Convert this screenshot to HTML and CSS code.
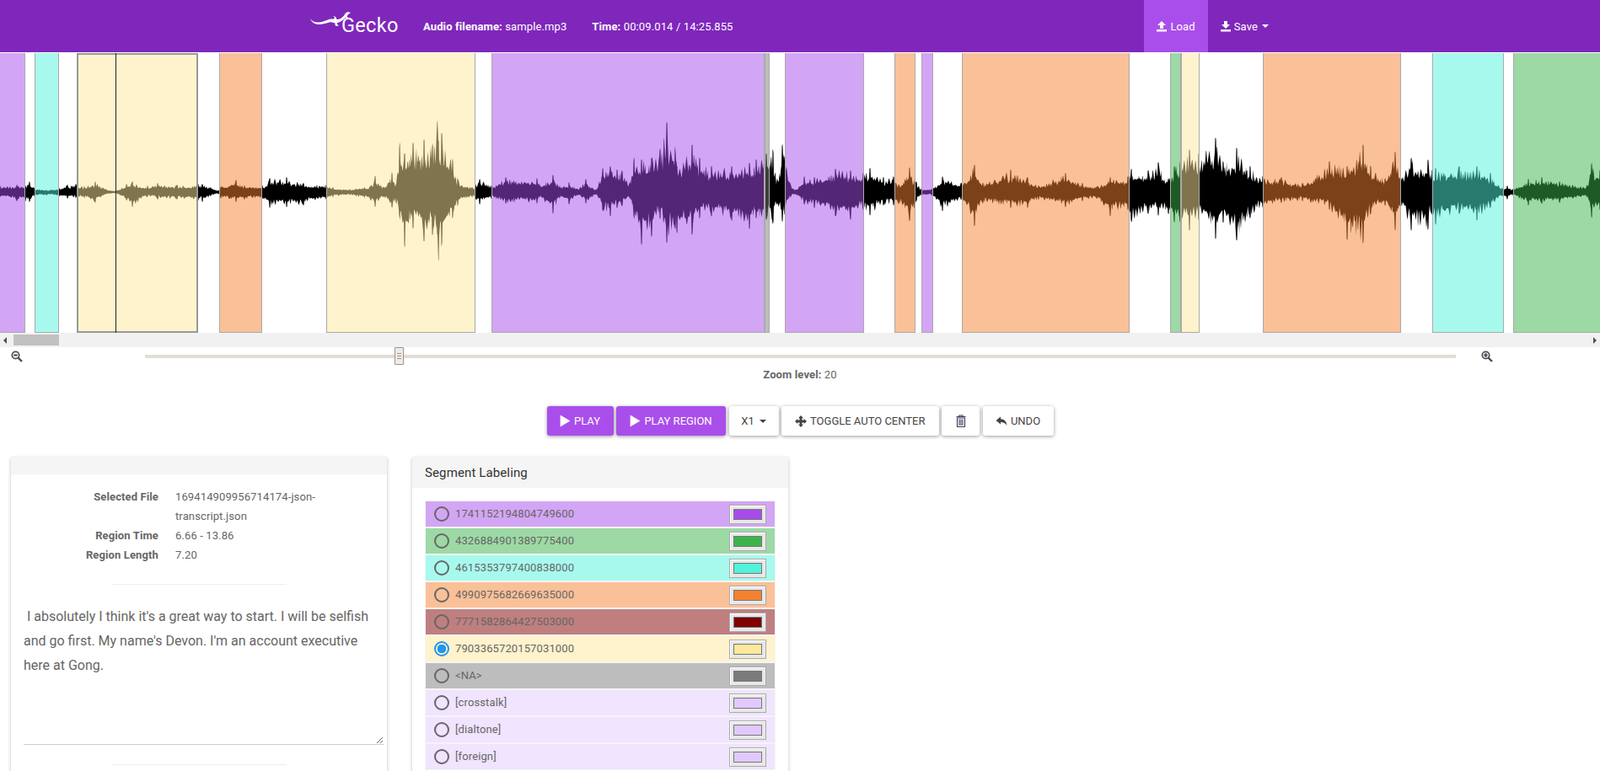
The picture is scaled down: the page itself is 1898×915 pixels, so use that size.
FILE: index.html
```html
<!DOCTYPE html>
<html lang="en">
<head>
    <meta charset="UTF-8">
    <meta name="viewport" content="width=device-width, initial-scale=1.0">
    <title>Gecko</title>
    <link rel="stylesheet" href="styles.css">
</head>

<body>
    <nav class="navbar">
        <a class="brand" href="#">
            <svg class="brand-logo" width="50" height="20" viewBox="0 0 50 20">
                <path fill="#fff" d="M0 8 C2 11 5 12.5 9 12.5 C14 12.5 17 11 21 9.5 C24 8.3 26 8.5 28 8.7 L29 6.5 L27.5 5.5 L28 5 L30 6 L31 7.5 L31.5 9 C34 9 36 8.5 38 6.5 L40 4.5 L42 1.5 L44 0.2 L47 0.5 L47.5 1.5 L45 3 L43.5 5.5 L45 7 L46 7.5 L45.5 8 L43.5 7.5 L41.5 7 C39.5 9.5 37 11.5 34 12.5 L31.5 13.5 L32.5 15.5 L34 16 L33.5 16.5 L30.5 17 L29.5 15.5 L29.5 13.5 C27 13 25.5 12.3 23.5 12.3 C19 13.5 15 15 10 15 C5 15 1.5 12 0 8 Z"/>
            </svg>
            <span class="brand-name">Gecko</span>
        </a>
        <span class="nav-info"><b>Audio filename:</b> sample.mp3</span>
        <span class="nav-info"><b>Time:</b> 00:09.014 / 14:25.855</span>
        <div class="nav-actions">
            <a class="nav-link active" href="#">
                <svg class="icon" width="14" height="14" viewBox="0 0 14 14"><path d="M7 1 L12 6 H9 V10 H5 V6 H2 Z M1 11 H13 V13.5 H1 Z"/></svg>
                Load
            </a>
            <a class="nav-link" href="#">
                <svg class="icon" width="14" height="14" viewBox="0 0 14 14"><path d="M5 1 H9 V5 H12 L7 10 L2 5 H5 Z M1 11 H13 V13.5 H1 Z"/></svg>
                Save <span class="caret"></span>
            </a>
        </div>
    </nav>

    <div class="waveform" id="waveform">
        <svg class="wave" width="1898" height="333" viewBox="0 0 1898 333"><path id="wavePath" d=""/></svg>
    </div>

    <div class="scrollbar">
        <span class="arrow-left"></span>
        <span class="scroll-thumb"></span>
        <span class="arrow-right"></span>
    </div>

    <div class="zoom-row">
        <svg class="zoom-icon" width="14" height="14" viewBox="0 0 14 14"><circle cx="5.5" cy="5.5" r="4.2"/><path class="handle" d="M8.6 8.6 L13 13"/><path class="plus" d="M3.3 5.5 H7.7"/></svg>
        <div class="slider">
            <span class="slider-handle"><i></i><i></i><i></i></span>
        </div>
        <svg class="zoom-icon right" width="14" height="14" viewBox="0 0 14 14"><circle cx="5.5" cy="5.5" r="4.2"/><path class="handle" d="M8.6 8.6 L13 13"/><path class="plus" d="M3.3 5.5 H7.7 M5.5 3.3 V7.7"/></svg>
    </div>
    <div class="zoom-level"><b>Zoom level:</b> 20</div>

    <div class="toolbar">
        <button class="btn primary play-btn"><svg class="icon" width="13" height="15" viewBox="0 0 12 14"><path d="M0.5 0.5 L11.5 7 L0.5 13.5 Z"/></svg> Play</button>
        <button class="btn primary region-btn"><svg class="icon" width="13" height="15" viewBox="0 0 12 14"><path d="M0.5 0.5 L11.5 7 L0.5 13.5 Z"/></svg> Play Region</button>
        <button class="btn speed-btn">x1 <span class="caret"></span></button>
        <button class="btn center-btn"><svg class="icon" width="14" height="14" viewBox="0 0 14 14"><path d="M7 0 L10 3.2 H8.4 V5.6 H10.8 V4 L14 7 L10.8 10 V8.4 H8.4 V10.8 H10 L7 14 L4 10.8 H5.6 V8.4 H3.2 V10 L0 7 L3.2 4 V5.6 H5.6 V3.2 H4 Z"/></svg> Toggle Auto Center</button>
        <button class="btn trash-btn"><svg class="trash" width="12" height="15" viewBox="0 0 12 15"><path d="M4 2 V1 H8 V2 M0.5 2.5 H11.5 M1.5 4 H10.5 V14.5 H1.5 Z M4 5.5 V13 M6 5.5 V13 M8 5.5 V13"/></svg></button>
        <button class="btn undo-btn"><svg class="icon" width="14" height="14" viewBox="0 0 14 14"><path d="M0.5 6 L6 1.5 V4.3 C10 4.3 13 7 13.5 12 C11.5 9 9 8 6 8 V10.5 Z"/></svg> Undo</button>
    </div>

    <div class="workspace">
        <section class="card">
            <div class="card-header empty"></div>
            <div class="file-info">
                <span class="info-label">Selected File</span><span>169414909956714174-json-transcript.json</span>
                <span class="info-label">Region Time</span><span>6.66 - 13.86</span>
                <span class="info-label">Region Length</span><span>7.20</span>
            </div>
            <hr class="divider">
            <textarea class="transcript" spellcheck="false"> I absolutely I think it's a great way to start. I will be selfish and go first. My name's Devon. I'm an account executive here at Gong.</textarea>
            <hr class="divider">
        </section>

        <section class="card">
            <div class="card-header">Segment Labeling</div>
            <div class="label-list" id="labelList"></div>
        </section>
    </div>

    <script src="app.js"></script>
</body>
</html>
```

FILE: styles.css
```css
html, body {
    height: 100%;
    overflow: hidden;
}
body {
    font-family: Roboto, "Liberation Sans", sans-serif;
    font-size: 13px;
    letter-spacing: 0.12px;
    color: #666;
    background: white;
    margin: 0;
}
b {
    font-weight: 700;
}

/* navbar */
.navbar {
    display: flex;
    align-items: center;
    height: 62px;
    padding: 0 378px 0 368px;
    background-color: #7f27bb;
    color: white;
}
.brand {
    display: block;
    position: relative;
    width: 134px;
    height: 62px;
    color: white;
    text-decoration: none;
}
.brand-logo {
    position: absolute;
    left: 0;
    top: 14px;
}
.brand-name {
    position: absolute;
    left: 37px;
    top: 17px;
    font-size: 23.5px;
    font-weight: 400;
    letter-spacing: 0.3px;
    line-height: 27px;
}
.nav-info {
    margin-right: 30px;
}
.nav-actions {
    display: flex;
    margin-left: auto;
}
.nav-link {
    display: flex;
    align-items: center;
    gap: 3px;
    height: 62px;
    padding: 0 15px 0 14px;
    color: white;
    text-decoration: none;
}
.nav-link.active {
    background-color: #aa4eeb;
}
.icon {
    fill: currentColor;
    flex: none;
}
.caret {
    display: inline-block;
    width: 0;
    height: 0;
    margin-left: 2px;
    vertical-align: middle;
    border-top: 4px solid;
    border-left: 4px solid transparent;
    border-right: 4px solid transparent;
}

/* waveform */
.waveform {
    position: relative;
    height: 333px;
    overflow: hidden;
}
.wave {
    position: absolute;
    left: 0;
    top: 0;
}
.region {
    position: absolute;
    top: 1px;
    bottom: 0;
    box-sizing: border-box;
    border: 1px solid #aaa;
    border-top: none;
}
.region.selected {
    border: 2px solid #999;
}
.cursor {
    position: absolute;
    top: 1px;
    bottom: 0;
    width: 1px;
    background: #222;
}

.scrollbar {
    display: flex;
    align-items: center;
    height: 17px;
    background: #f1f1f1;
}
.arrow-left, .arrow-right {
    width: 0;
    height: 0;
    border-top: 4px solid transparent;
    border-bottom: 4px solid transparent;
}
.arrow-left {
    margin-left: 4px;
    border-right: 4px solid #505050;
}
.arrow-right {
    margin-left: auto;
    margin-right: 4px;
    border-left: 4px solid #505050;
}
.scroll-thumb {
    width: 54px;
    height: 13px;
    margin-left: 8px;
    background: #c1c1c1;
}

/* zoom */
.zoom-row {
    display: flex;
    align-items: center;
    height: 21px;
    padding-left: 13px;
}
.zoom-icon {
    flex: none;
    fill: none;
    stroke: #4a4f58;
    stroke-width: 1.8;
}
.zoom-icon .handle {
    stroke-width: 2.4;
}
.zoom-icon .plus {
    stroke-width: 2.2;
}
.zoom-icon.right {
    margin-left: 30px;
}
.slider {
    position: relative;
    width: 1555px;
    height: 4px;
    margin-left: 145px;
    background: #e1dcd5;
}
.slider-handle {
    position: absolute;
    left: 296px;
    top: -9px;
    display: flex;
    flex-direction: column;
    align-items: center;
    justify-content: center;
    gap: 2px;
    box-sizing: border-box;
    width: 11px;
    height: 21px;
    background: #efebe7;
    border: 1px solid #9c9389;
    border-radius: 1px;
}
.slider-handle i {
    width: 5px;
    height: 1px;
    background: #9c9389;
}
.zoom-level {
    margin-top: 2px;
    text-align: center;
    line-height: 20px;
}

/* toolbar */
.toolbar {
    display: flex;
    justify-content: center;
    gap: 3.5px;
    margin-top: 27px;
}
.btn {
    display: flex;
    align-items: center;
    justify-content: center;
    gap: 4px;
    height: 35px;
    padding: 0;
    font-family: inherit;
    font-size: 13px;
    text-transform: uppercase;
    color: #444;
    background: white;
    border: none;
    border-radius: 3px;
    box-shadow: 0 1px 4px rgba(0, 0, 0, 0.4);
    cursor: pointer;
}
.btn.primary {
    color: white;
    background-color: #aa4eeb;
}
.play-btn { width: 79px; }
.region-btn { width: 130px; }
.speed-btn { width: 59px; }
.center-btn { width: 186.5px; }
.trash-btn { width: 45px; }
.undo-btn { width: 84px; }
.trash {
    fill: none;
    stroke: #3f3a58;
    stroke-width: 1.1;
}

/* cards */
.workspace {
    display: flex;
    gap: 30px;
    margin-top: 26px;
    padding-left: 13px;
}
.card {
    width: 446px;
    height: 500px;
    background: white;
    box-shadow: 0 1px 4px rgba(0, 0, 0, 0.25);
}
.card-header {
    height: 36px;
    padding: 0 15px;
    font-size: 15px;
    line-height: 37px;
    color: #333;
    background: #f5f5f5;
}
.card-header.empty {
    height: 20px;
}
.file-info {
    display: grid;
    grid-template-columns: 175px 175px;
    column-gap: 20px;
    padding-top: 15px;
    line-height: 23px;
}
.info-label {
    font-weight: 700;
    text-align: right;
}
.divider {
    width: 208px;
    height: 1px;
    margin: 23px auto;
    background: #eee;
    border: none;
}
.transcript {
    display: block;
    box-sizing: border-box;
    width: 427px;
    height: 167px;
    margin-left: 15px;
    padding: 0;
    font-family: inherit;
    font-size: 16px;
    letter-spacing: 0;
    line-height: 29px;
    color: #666;
    border: none;
    border-bottom: 1px solid #ccc;
    outline: none;
}

/* segment labels */
.label-list {
    padding: 15px;
}
.label-row {
    display: flex;
    align-items: center;
    box-sizing: border-box;
    height: 32px;
    padding: 0 10px;
    border: 1px solid #f5f5f5;
}
.label-name {
    margin-bottom: 2px;
}
.radio {
    appearance: none;
    flex: none;
    box-sizing: border-box;
    width: 18px;
    height: 18px;
    margin: 0 7px 0 0;
    border: 2px solid #666;
    border-radius: 50%;
}
.radio:checked {
    border-color: #2196f3;
    background: radial-gradient(circle, #2196f3 0 5px, transparent 5.5px);
}
.swatch {
    flex: none;
    box-sizing: border-box;
    width: 44px;
    height: 23px;
    margin: 0 0 0 auto;
    padding: 0;
    background: #e8e8e8;
    border: 1px solid #aaa;
    border-radius: 0;
    box-shadow: inset 1px 1px 0 #fff;
}
.swatch::-webkit-color-swatch-wrapper {
    padding: 4px;
}
.swatch::-webkit-color-swatch {
    border: 1px solid #777;
    border-radius: 0;
}
```

FILE: app.js
```js
// region colours, also used by the label list
const colors = {
    purple: "#a74ceb",
    green: "#3cb44b",
    cyan: "#52f3db",
    orange: "#f58231",
    maroon: "#800000",
    yellow: "#fde89b",
    grey: "#7b7b7b",
    light: "#e1c9ff"
};

const regions = [
    [-2, 30, "purple"], [41, 70, "cyan"], [91, 235, "yellow", true], [260, 311, "orange"],
    [387, 564, "yellow"], [583, 907, "purple"], [907, 913, "grey"], [931, 1025, "purple"],
    [1061, 1086, "orange"], [1093, 1107, "purple"], [1141, 1340, "orange"], [1388, 1401, "green"],
    [1401, 1423, "yellow"], [1498, 1662, "orange"], [1699, 1784, "cyan"], [1795, 1900, "green"]
];

const labels = [
    ["1741152194804749600", "purple"], ["4326884901389775400", "green"],
    ["4615353797400838000", "cyan"], ["4990975682669635000", "orange"],
    ["7771582864427503000", "maroon"], ["7903365720157031000", "yellow", true],
    ["<NA>", "grey"], ["[crosstalk]", "light"], ["[dialtone]", "light"], ["[foreign]", "light"]
];

// wave envelope: x, height above centre, depth below centre
const envelope = [
    [0,7,5],[20,8,10],[30,7,10],[35,12,11],[41,4,4],[55,2,3],[70,4,4],[80,8,7],[90,9,6],[100,6,6],
    [113,12,12],[125,3,2],[137,1,1],[150,9,9],[157,12,17],[175,7,5],[187,10,8],[210,8,8],[235,9,9],
    [240,9,11],[250,5,4],[259,1,1],[262,6,7],[280,14,11],[290,7,8],[311,7,7],[320,16,18],[340,17,17],
    [360,10,15],[387,8,8],[395,5,5],[415,3,3],[440,7,9],[445,19,17],[455,5,5],[465,23,18],[470,8,12],
    [474,58,30],[480,45,65],[490,58,42],[503,62,58],[513,55,50],[519,85,50],[520,60,82],[524,70,62],
    [537,38,30],[543,15,15],[560,5,5],[564,8,8],[569,15,14],[583,7,7],[600,17,13],[637,16,13],
    [640,8,5],[656,20,25],[664,6,6],[675,11,14],[685,3,3],[695,15,13],[707,2,2],[715,28,22],[724,30,28],
    [732,26,18],[738,25,16],[747,10,6],[752,40,30],[761,38,62],[773,40,52],[783,50,30],[791,83,60],
    [801,52,42],[803,30,48],[821,56,50],[830,40,30],[844,30,28],[868,30,33],[889,34,43],[897,38,30],
    [907,45,30],[909,45,32],[917,50,37],[922,12,12],[928,57,35],[931,40,25],[938,8,5],[944,2,2],
    [954,18,14],[966,17,18],[991,27,28],[1009,25,32],[1024,22,20],[1032,28,27],[1048,17,15],[1060,18,15],
    [1066,8,13],[1079,29,34],[1085,12,18],[1087,12,10],[1093,3,3],[1105,3,3],[1118,18,22],[1140,10,8],
    [1156,32,40],[1166,10,12],[1199,26,18],[1219,17,18],[1232,7,8],[1264,22,17],[1284,10,10],[1301,6,7],
    [1317,17,28],[1338,18,20],[1342,27,35],[1362,25,25],[1374,35,27],[1386,15,25],[1393,30,35],[1400,35,35],
    [1411,50,45],[1422,45,32],[1442,64,55],[1451,35,35],[1467,52,57],[1483,30,30],[1498,18,17],[1520,17,12],
    [1545,10,10],[1577,36,20],[1598,30,56],[1617,56,60],[1626,30,25],[1643,15,15],[1655,48,45],[1662,15,15],
    [1674,40,45],[1694,38,44],[1699,25,25],[1703,28,38],[1731,30,25],[1752,30,33],[1768,22,18],[1782,4,4],
    [1788,7,8],[1795,3,3],[1813,15,15],[1829,17,13],[1850,12,12],[1882,6,4],[1888,34,30],[1898,25,20]
];

// seeded so every load draws the same wave
let seed = 20;
function rand() {
    seed = (seed * 16807) % 2147483647;
    return seed / 2147483647;
}

function envelopeAt(x) {
    let i = 1;
    while (i < envelope.length - 1 && envelope[i][0] < x) i++;
    const a = envelope[i - 1], b = envelope[i];
    const t = Math.min(1, Math.max(0, (x - a[0]) / (b[0] - a[0] || 1)));
    return [a[1] + (b[1] - a[1]) * t, a[2] + (b[2] - a[2]) * t];
}

// one side of the wave: spikes every few px with lower valleys between them
function spikeTrain() {
    const out = [];
    let x = 0;
    while (x <= 1900) {
        const next = x + 1 + rand() * 3.5;
        const peak = 0.55 + 0.45 * rand();
        const mid = x + (next - x) * 0.5;
        out.push([mid, peak], [next, 0.38 + 0.22 * rand()]);
        x = next;
    }
    return out;
}

function trainAt(train, state, x) {
    while (state.i < train.length - 1 && train[state.i][0] < x) state.i++;
    const b = train[state.i], a = train[Math.max(0, state.i - 1)];
    const t = Math.min(1, Math.max(0, (x - a[0]) / (b[0] - a[0] || 1)));
    return a[1] + (b[1] - a[1]) * t;
}

function buildWave() {
    const center = 166;
    const upper = spikeTrain(), lower = spikeTrain();
    const upState = { i: 0 }, downState = { i: 0 };
    const top = [], bottom = [];
    for (let x = 0; x <= 1898; x += 0.5) {
        const env = envelopeAt(x);
        // keep the tall peaks that were measured at envelope points
        const onPoint = envelope.some(p => Math.abs(p[0] - x) < 0.6);
        const up = env[0] * (onPoint ? 1 : trainAt(upper, upState, x));
        const down = env[1] * (onPoint ? 1 : trainAt(lower, downState, x));
        top.push(x + " " + (center - up - 0.5).toFixed(1));
        bottom.unshift(x + " " + (center + down + 0.5).toFixed(1));
    }
    document.getElementById("wavePath").setAttribute("d", "M" + top.join("L") + "L" + bottom.join("L") + "Z");
}

function hexToRgba(hex, alpha) {
    const n = parseInt(hex.slice(1), 16);
    return "rgba(" + (n >> 16) + "," + ((n >> 8) & 255) + "," + (n & 255) + "," + alpha + ")";
}

function buildRegions() {
    const box = document.getElementById("waveform");
    regions.forEach(r => {
        const el = document.createElement("div");
        el.className = r[3] ? "region selected" : "region";
        el.style.left = r[0] + "px";
        el.style.width = (r[1] - r[0]) + "px";
        el.style.backgroundColor = hexToRgba(colors[r[2]], 0.5);
        box.appendChild(el);
    });
    const cursor = document.createElement("div");
    cursor.className = "cursor";
    cursor.style.left = "137px";
    box.appendChild(cursor);
}

function buildLabels() {
    const list = document.getElementById("labelList");
    labels.forEach(item => {
        const row = document.createElement("label");
        row.className = "label-row";
        row.style.backgroundColor = hexToRgba(colors[item[1]], 0.5);

        const radio = document.createElement("input");
        radio.type = "radio";
        radio.name = "speaker";
        radio.className = "radio";
        radio.checked = !!item[2];

        const name = document.createElement("span");
        name.className = "label-name";
        name.innerText = item[0];

        const swatch = document.createElement("input");
        swatch.type = "color";
        swatch.className = "swatch";
        swatch.value = colors[item[1]];

        row.append(radio, name, swatch);
        list.appendChild(row);
    });
}

buildWave();
buildRegions();
buildLabels();
```
